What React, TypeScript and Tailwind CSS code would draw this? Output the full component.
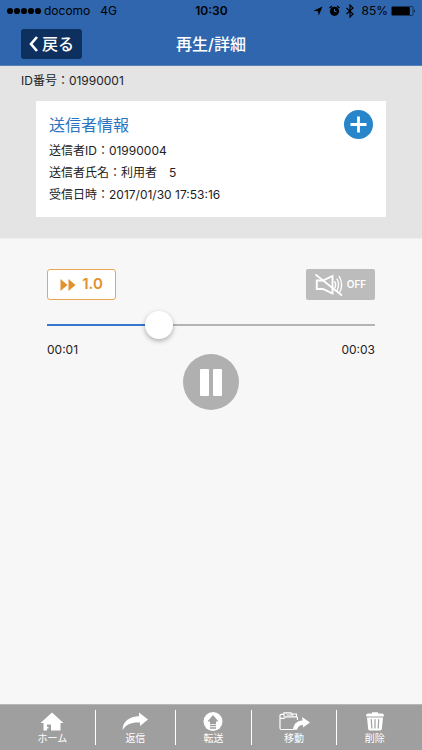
import { useState } from 'react';
import type { ReactNode } from 'react';

interface NavItem {
  id: string;
  label: string;
  width: string;
  icon: ReactNode;
}

const senderInfo = [
  { label: '送信者ID', value: '01990004' },
  { label: '送信者氏名', value: '利用者　5' },
  { label: '受信日時', value: '2017/01/30 17:53:16' }
];

const navItems: NavItem[] = [
  {
    id: 'home',
    label: 'ホーム',
    width: 'flex-[17]',
    icon: (
      <svg className="w-6 h-5" viewBox="0 0 24 20" fill="currentColor">
        <path d="M12 0.500L23.500 11H20.500V18.500H11V12.500H7V15H8.500V16.500H7V18.500H3.500V11H0.500Z" />
      </svg>
    )
  },
  {
    id: 'reply',
    label: '返信',
    width: 'flex-[16]',
    icon: (
      <svg className="w-[26px] h-5" viewBox="0 0 26 20" fill="currentColor">
        <path d="M17 0.500L26 7.500L18 14V10.500C10 10 4.500 12 0.500 18C0.500 9.500 7.500 4.200 17 4.200Z" />
      </svg>
    )
  },
  {
    id: 'forward',
    label: '転送',
    width: 'flex-[15]',
    icon: (
      <svg className="w-5 h-5" viewBox="0 0 20 20">
        <circle cx="10" cy="9.500" r="9.500" fill="#fff" />
        <path d="M10 3L15.500 9.500H13V12H7V9.500H4.500Z" fill="#9f9f9f" />
        <path d="M7 13.500H13M7 16H13" stroke="#9f9f9f" strokeWidth="1.400" />
      </svg>
    )
  },
  {
    id: 'move',
    label: '移動',
    width: 'flex-[17]',
    icon: (
      <svg className="w-[31px] h-5" viewBox="0 0 31 20" fill="none" stroke="currentColor">
        <path d="M14.500 17.500H2.500Q1 17.500 1 16V3.500Q1 2.300 2.200 2.300H4.500M18.500 8V6Q18.500 4.800 17.300 4.800H6.500L5 6.300H1M5 4.800V0.800H12L13 2H17.500V4.800M7.500 3H14.500" strokeWidth="1.200" />
        <path d="M23 5L31 10.500L24 15.500V13C20.500 13 19 14.500 18 17.800H14C14.500 12.500 17.500 8.700 23.500 8.500Z" fill="currentColor" stroke="none" />
      </svg>
    )
  },
  {
    id: 'delete',
    label: '削除',
    width: 'flex-[15]',
    icon: (
      <svg className="w-[18px] h-5" viewBox="0 0 18 20" fill="currentColor">
        <path d="M6 1.500V0.300H12V1.500H16Q17.800 1.500 17.800 3V4.500H0.200V3Q0.200 1.500 2 1.500Z" />
        <path d="M1 5.500H17L15.800 17Q15.500 18.500 14 18.500H4Q2.500 18.500 2.200 17Z" />
        <path d="M5.300 7.500L5.800 16M9 7.500V16M12.700 7.500L12.200 16" fill="none" stroke="#9f9f9f" strokeWidth="1.200" strokeLinecap="round" />
      </svg>
    )
  }
];

function StatusBar() {
  return (
    <div className="grid grid-cols-3 items-center h-[22px] pl-[7px] pr-1.5 text-[12px] leading-4 text-black">
      <div className="flex items-center">
        <svg className="w-[35px] h-2 mr-[2px]" viewBox="0 0 35 8">
          {[3, 10, 17, 24, 31].map((cx) => (
            <circle key={cx} cx={cx} cy="4" r="3.100" />
          ))}
        </svg>
        <span>docomo</span>
        <span className="ml-2.5">4G</span>
      </div>
      <span className="text-center font-semibold">10:30</span>
      <div className="flex items-center justify-end">
        <svg className="w-2.5 h-2.5 mr-1.5" viewBox="0 0 10 10">
          <path d="M9.500 0.500L5.800 9.500L5 5.200L0.500 4.800Z" />
        </svg>
        <svg className="w-[11px] h-3 mr-1.5" viewBox="0 0 11 12">
          <circle cx="5.500" cy="6.300" r="4.600" />
          <path d="M0.600 3L3 0.900M10.400 3L8 0.900" stroke="#000" strokeWidth="1.300" />
          <path d="M5.500 4V6.500H7.500" fill="none" stroke="#2f66ae" strokeWidth="1" />
        </svg>
        <svg className="w-2 h-[14px] mr-[7px]" viewBox="0 0 8 14">
          <path d="M0.500 4L7 10L4 13V1L7 4L0.500 10" fill="none" stroke="#000" strokeWidth="1.200" />
        </svg>
        <span className="mr-[3px]">85%</span>
        <svg className="w-[25px] h-2.5" viewBox="0 0 25 10">
          <rect x="0.500" y="0.500" width="21.500" height="9" rx="1" fill="none" stroke="#10294b" strokeWidth="0.800" />
          <rect x="1" y="1" width="17.800" height="8" />
          <path d="M23 3.300Q24.800 5 23 6.700Z" />
        </svg>
      </div>
    </div>
  );
}

function Player() {
  const [muted, setMuted] = useState(true);
  const [position, setPosition] = useState(0.98);
  const duration = 3;
  const percent = (position / duration) * 100;

  const formatTime = (seconds: number) => `00:${String(Math.round(seconds)).padStart(2, '0')}`;

  return (
    <main className="flex-1 bg-[#f7f7f7] px-[47px] pt-[30px]">
      <div className="flex justify-between">
        <button className="flex items-center justify-center gap-1.5 w-[69px] h-[31px] rounded-[3px] border border-[#e8a753] bg-white text-[#e1922f] text-[15px] font-semibold">
          <svg className="w-4 h-3" viewBox="0 0 16 12" fill="currentColor">
            <path d="M0.500 0L7.500 6L0.500 12ZM8.500 0L15.500 6L8.500 12Z" />
          </svg>
          1.0
        </button>
        <button
          onClick={() => setMuted(!muted)}
          aria-label="ミュート"
          className="flex items-center justify-center gap-1 w-[69px] h-[31px] rounded-[2px] bg-[#bcbcbc] text-white text-[10px] font-semibold"
        >
          <svg className="w-7 h-6" viewBox="0 0 28 24" fill="none" stroke="currentColor">
            <path d="M1.800 7.500H8L17.500 3V20.500L8 16H1.800Z" strokeWidth="1.900" />
            <path d="M19.500 8Q21.800 11.700 19.500 15.500M21.800 5.500Q25.200 11.700 21.800 18M24 3Q29 11.700 24.500 19.500" strokeWidth="1.400" />
            {muted && <path d="M0.500 1.500L27 22.500" strokeWidth="1.600" />}
          </svg>
          {muted ? 'OFF' : 'ON'}
        </button>
      </div>

      <input
        type="range"
        aria-label="再生位置"
        min={0}
        max={duration}
        step={0.01}
        value={position}
        onChange={(e) => setPosition(Number(e.target.value))}
        style={{ backgroundImage: `linear-gradient(to right, #3678ce ${percent}%, #b4b4b4 ${percent}%)` }}
        className="block w-full h-7 mt-[11px] appearance-none rounded-full bg-[length:100%_2px] bg-center bg-no-repeat [&::-webkit-slider-thumb]:appearance-none [&::-webkit-slider-thumb]:size-7 [&::-webkit-slider-thumb]:rounded-full [&::-webkit-slider-thumb]:bg-white [&::-webkit-slider-thumb]:shadow-[0_2px_5px_rgba(0,0,0,0.3)]"
      />

      <div className="flex justify-between mt-px text-[12px] leading-5 text-[#222]">
        <span>{formatTime(position)}</span>
        <span>{formatTime(duration)}</span>
      </div>

      <button
        aria-label="一時停止"
        className="flex items-center justify-center gap-1 w-14 h-14 mx-auto -mt-1.5 rounded-full bg-[#b0b0b0]"
      >
        <span className="w-[9px] h-[27px] rounded-[1px] bg-white"></span>
        <span className="w-[9px] h-[27px] rounded-[1px] bg-white"></span>
      </button>
    </main>
  );
}

function App() {
  return (
    <div className="min-h-screen flex flex-col bg-[#f7f7f7] font-['Inter','Noto_Sans_CJK_JP',sans-serif]">
      <header className="bg-[#2f66ae] border-b border-[#5580b8]">
        <StatusBar />
        <div className="grid grid-cols-[1fr_auto_1fr] items-center h-[43px] px-[21px] text-white">
          <button className="flex items-center justify-center gap-1 w-[61px] h-[30px] rounded-[3px] bg-[#0e305f] text-base font-medium">
            <svg className="w-[9px] h-4" viewBox="0 0 9 16" fill="none" stroke="currentColor" strokeWidth="2.600">
              <path d="M8 1L2 8L8 15" />
            </svg>
            戻る
          </button>
          <h1 className="text-base font-medium">再生/詳細</h1>
        </div>
      </header>

      <section className="bg-[#e4e4e4] border-b border-[#eeeeee] pl-[21px] pr-9 pt-[5px] pb-[21px] text-[#222]">
        <p className="text-[12px] leading-5">ID番号：01990001</p>
        <div className="flex items-start justify-between ml-[15px] mt-2.5 h-[116px] bg-white px-[13px] pt-[9px]">
          <div>
            <h2 className="text-base leading-[30px] text-[#2b75c0]">送信者情報</h2>
            {senderInfo.map((row) => (
              <p key={row.label} className="text-[12px] leading-[22px]">
                {row.label}：{row.value}
              </p>
            ))}
          </div>
          <button aria-label="追加" className="w-[29px] h-[29px] rounded-full bg-[#2985c9]">
            <svg viewBox="0 0 29 29" stroke="#fff" strokeWidth="2.800">
              <path d="M14.500 6.500V22.500M6.500 14.500H22.500" />
            </svg>
          </button>
        </div>
      </section>

      <Player />

      <footer className="bg-[#9f9f9f] border-t border-[#b8b8b8] px-2.5 py-[5px] text-white">
        <nav className="flex divide-x divide-white">
          {navItems.map((item) => (
            <a
              key={item.id}
              href={`#${item.id}`}
              className={`${item.width} flex flex-col items-center h-[35px] pt-0.5 text-[10px] leading-3 font-['Noto_Sans_CJK_JP',sans-serif]`}
            >
              {item.icon}
              <span>{item.label}</span>
            </a>
          ))}
        </nav>
      </footer>
    </div>
  );
}

export default App;
